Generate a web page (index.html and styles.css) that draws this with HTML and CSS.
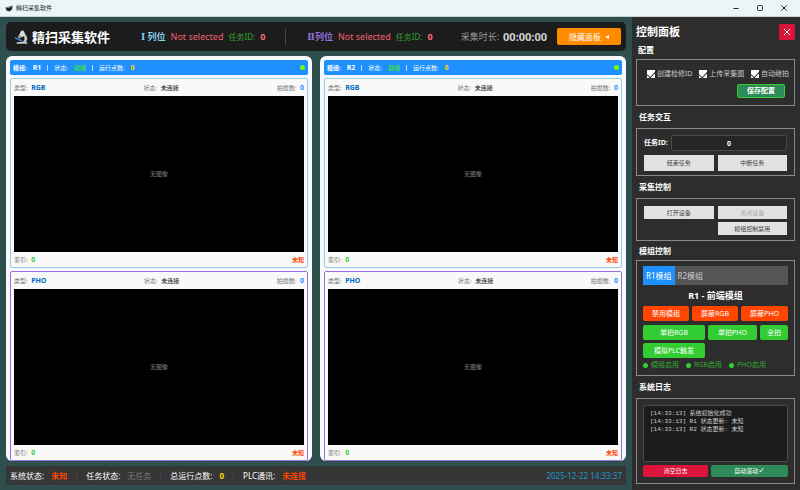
FILE: index.html
```html
<!DOCTYPE html>
<html lang="zh-CN">
<head>
<meta charset="utf-8">
<title>精扫采集软件</title>
<link rel="stylesheet" href="styles.css">
</head>
<body>
<div class="titlebar">
  <svg class="app-icon" viewBox="0 0 16 16"><path d="M1 7l8-2 6-2-1 8-5 4-6-2z" fill="#222"/><path d="M2 7l6 1 6-4-5 0z" fill="#8aa"/></svg>
  <span class="app-name">精扫采集软件</span>
  <button class="win-btn" aria-label="最小化"><svg viewBox="0 0 8 8"><path d="M1.500 4.500h5"/></svg></button>
  <button class="win-btn" aria-label="最大化"><svg viewBox="0 0 8 8"><rect x="1.500" y="1.500" width="5" height="5" rx="1"/></svg></button>
  <button class="win-btn" aria-label="关闭"><svg viewBox="0 0 8 8"><path d="M1.500 1.500l5 5M6.500 1.500l-5 5"/></svg></button>
</div>
<div class="app">
  <main class="main">
    <header class="header">
      <svg class="logo" viewBox="0 0 40 38"><path d="M20 2l6-2 7 12-9 8-10-5z" fill="#d8dcde"/><path d="M13 15l8 4-3 5-8-4z" fill="#9aa0a4"/><path d="M30 11c9 4 10 15 4 22h-9c6-5 7-12 2-17z" fill="#c4c9cc"/><path d="M3 19l22 10-2 4L2 23z" fill="#3d7fd0"/><path d="M10 33h26l3 5H6z" fill="#c4c9cc"/></svg>
      <h1>精扫采集软件</h1>
      <div class="lane">
        <b class="lane-one"><span class="roman">Ⅰ</span> 列位</b><span class="unselected">Not selected</span><span class="task">任务ID:</span><b class="task-num">0</b>
      </div>
      <i class="divider"></i>
      <div class="lane">
        <b class="lane-two"><span class="roman">Ⅱ</span>列位</b><span class="unselected">Not selected</span><span class="task">任务ID:</span><b class="task-num">0</b>
      </div>
      <div class="elapsed">采集时长:<b>00:00:00</b></div>
      <button class="hide-btn">隐藏面板 <svg viewBox="0 0 4 6"><path d="M4 1v4L0 3z" fill="#fff"/></svg></button>
    </header>
    <div class="modules">
      <section class="module">
        <div class="module-bar"><b>模组:</b><b class="name">R1</b><i></i><span>状态:</span><b class="ready">就绪</b><i></i><span>运行点数:</span><b class="points">0</b><em class="lamp"></em></div>
        <article class="camera rgb">
          <div class="row"><span>类型: <b class="kind">RGB</b></span><span>状态: <b>未连接</b></span><span>拍摄数: <b class="count">0</b></span></div>
          <div class="view">无图像</div>
          <div class="row foot"><span>索引: <b class="index">0</b></span><b class="unknown">未知</b></div>
        </article>
        <article class="camera pho">
          <div class="row"><span>类型: <b class="kind">PHO</b></span><span>状态: <b>未连接</b></span><span>拍摄数: <b class="count">0</b></span></div>
          <div class="view">无图像</div>
          <div class="row foot"><span>索引: <b class="index">0</b></span><b class="unknown">未知</b></div>
        </article>
      </section>
      <section class="module">
        <div class="module-bar"><b>模组:</b><b class="name">R2</b><i></i><span>状态:</span><b class="ready">就绪</b><i></i><span>运行点数:</span><b class="points">0</b><em class="lamp"></em></div>
        <article class="camera rgb">
          <div class="row"><span>类型: <b class="kind">RGB</b></span><span>状态: <b>未连接</b></span><span>拍摄数: <b class="count">0</b></span></div>
          <div class="view">无图像</div>
          <div class="row foot"><span>索引: <b class="index">0</b></span><b class="unknown">未知</b></div>
        </article>
        <article class="camera pho">
          <div class="row"><span>类型: <b class="kind">PHO</b></span><span>状态: <b>未连接</b></span><span>拍摄数: <b class="count">0</b></span></div>
          <div class="view">无图像</div>
          <div class="row foot"><span>索引: <b class="index">0</b></span><b class="unknown">未知</b></div>
        </article>
      </section>
    </div>
    <footer class="status">
      <span>系统状态:</span><b class="bad">未知</b><i></i>
      <span>任务状态:</span><span class="none">无任务</span><i></i>
      <span>总运行点数:</span><b class="total">0</b><i></i>
      <span>PLC通讯:</span><b class="bad">未连接</b>
      <time>2025-12-22 14:33:37</time>
    </footer>
  </main>
  <aside class="sidebar">
    <div class="side-head"><h2>控制面板</h2><button class="close" aria-label="关闭面板"><svg viewBox="0 0 8 8"><path d="M1 1l6 6M7 1l-6 6"/></svg></button></div>
    <h3 class="first">配置</h3>
    <div class="group config">
      <div class="checks">
        <label><input type="checkbox" checked>创建检修ID</label>
        <label><input type="checkbox" checked>上传采集图</label>
        <label><input type="checkbox" checked>自动继拍</label>
      </div>
      <button class="save">保存配置</button>
    </div>
    <h3>任务交互</h3>
    <div class="group">
      <div class="field"><label for="task">任务ID:</label><input id="task" type="text" value="0"></div>
      <div class="pair tall"><button class="plain">结束任务</button><button class="plain">中断任务</button></div>
    </div>
    <h3>采集控制</h3>
    <div class="group devices">
      <div class="pair"><button class="plain">打开设备</button><button class="plain" disabled>关闭设备</button><button class="plain second">模组控制禁用</button></div>
    </div>
    <h3 class="compact">模组控制</h3>
    <div class="group control">
      <div class="tabs"><button class="tab active">R1模组</button><button class="tab">R2模组</button></div>
      <h4>R1 - 前端模组</h4>
      <div class="oranges"><button class="orange">禁用模组</button><button class="orange">屏蔽RGB</button><button class="orange">屏蔽PHO</button></div>
      <div class="greens"><button class="green">单拍RGB</button><button class="green">单拍PHO</button><button class="green">全拍</button><button class="green">模拟PLC触发</button></div>
      <div class="flags"><span>模组启用</span><span>RGB启用</span><span>PHO启用</span></div>
    </div>
    <h3>系统日志</h3>
    <div class="group log-group">
      <div class="log"><p>[14:33:13] 系统初始化成功</p><p>[14:33:13] R1 状态更新: 未知</p><p>[14:33:13] R2 状态更新: 未知</p></div>
      <div class="log-actions"><button class="clear">清空日志</button><button class="scroll">自动滚动<span class="tick">✓</span></button></div>
    </div>
  </aside>
</div>
</body>
</html>
```
FILE: styles.css
```css
* { box-sizing: border-box; margin: 0; padding: 0; }
body {
  display: flex;
  flex-direction: column;
  min-height: 100vh;
  background: #2f4f4f;
  color: #fff;
  font: 8px/12px "Noto Sans", "Noto Sans CJK SC", sans-serif;
  white-space: nowrap;
}
button, input { font: inherit; color: inherit; border: 0; }
i, em { font-style: normal; }
svg { display: block; }

.titlebar {
  display: flex;
  align-items: center;
  height: 17px;
  padding: 0 4px 1px 5px;
  background: #eaf5f8;
  border-bottom: 1px solid #c4d4d6;
  color: #222;
}
.app-icon { width: 8px; height: 8px; }
.app-name { flex: 1; margin-left: 3px; font-size: 6px; }
.win-btn { display: flex; justify-content: center; width: 24px; background: none; }
.win-btn svg { width: 8px; height: 8px; fill: none; stroke: #222; stroke-width: 1; }

.app { flex: 1; display: flex; }
.main { flex: 1; display: flex; flex-direction: column; padding: 5px 6px; }

.header {
  display: flex;
  align-items: center;
  height: 29px;
  padding: 0 5px 0 8px;
  background: #1c1c1c;
  border-radius: 5px;
  font-size: 9px;
}
.logo { width: 14px; height: 14px; }
h1 { margin: 0 31px 0 4px; font-size: 13px; }
.lane { display: flex; align-items: center; gap: 5px; }
.lane-one { color: #87ceeb; }
.lane-two { color: #9370db; }
.roman { font-family: "DejaVu Serif", serif; }
.unselected { color: #f0606c; }
.task { color: #32a532; font-size: 8px; }
.task-num { color: #ff6b6b; }
.divider { width: 1px; height: 16px; margin: 0 21px 0 20px; background: #484848; }
.elapsed { display: flex; align-items: center; gap: 4px; margin-left: auto; color: #999; }
.elapsed b { font-size: 11px; color: #d0d0d0; }
.hide-btn {
  display: flex;
  align-items: center;
  justify-content: center;
  gap: 4px;
  width: 64px;
  height: 17px;
  margin-left: 10px;
  background: #ff8c00;
  border-radius: 2px;
  font-size: 8px;
}
.hide-btn svg { width: 4px; height: 6px; }

.modules { flex: 1; display: grid; grid-template-columns: 1fr 1fr; gap: 8px; margin: 5px 0; }
.module {
  display: flex;
  flex-direction: column;
  gap: 3px;
  padding: 4px 4px 0;
  background: #f8f8ff;
  border-radius: 6px;
}
.module-bar {
  display: flex;
  align-items: center;
  gap: 6px;
  height: 15px;
  padding: 0 3px;
  background: #1e90ff;
  border-radius: 2px;
  font-size: 6px;
}
.module-bar i { width: 1px; height: 6px; background: #b9dcff; }
.module-bar .name, .module-bar .points { font-size: 7px; }
.ready { color: #3fdc50; }
.points { color: #ffd700; }
.lamp { width: 5px; height: 5px; margin-left: auto; background: #7cfc00; border-radius: 50%; }
.camera {
  flex: 1;
  display: flex;
  flex-direction: column;
  padding: 0 3px;
  background: #f9f9f9;
  border: 1px solid #87ceeb;
  border-radius: 2px;
}
.camera.rgb { border-color: #8fd0dc; }
.camera.pho { border-color: #9370db; }
.row {
  display: flex;
  justify-content: space-between;
  align-items: center;
  height: 17px;
  color: #777;
  font-size: 6px;
}
.row.foot { height: 15px; }
.row b { margin-left: 2px; color: #555; }
.row .kind, .row .count, .row .index { font-size: 7px; }
.row .kind { color: #0068c0; }
.row .count { color: #1e90ff; }
.row .index { color: #32cd32; }
.row .unknown { color: #ff4500; }
.view {
  flex: 1;
  display: flex;
  align-items: center;
  justify-content: center;
  background: #000;
  color: #808080;
  font-size: 6px;
}

.status { display: flex; align-items: center; height: 19px; padding: 0 4px; background: #363636; }
.status b, .status .none { margin-left: 7px; }
.status i { width: 1px; height: 8px; margin: 0 9px; background: #444; }
.bad { color: #ff4500; }
.none { color: #777; }
.total { color: #ffd700; }
.status time { margin-left: auto; color: #1c96cc; }

.sidebar { width: 168px; padding: 7px 5px 5px 4px; background: #2d2d2d; }
.side-head { display: flex; justify-content: space-between; height: 16px; align-items: center; }
h2 { font-size: 11px; }
.close { display: grid; place-items: center; width: 16px; height: 16px; background: #dc143c; border-radius: 2px; }
.close svg { width: 8px; height: 8px; fill: none; stroke: #fff; stroke-width: 1; }
h3 { height: 22px; padding: 5px 3px; font-size: 8px; }
h3.first { height: 19px; padding: 4px 2px; }
h3.compact { height: 19px; padding: 4px 3px; }
.group { padding: 6px 7px 4px; border: 1px solid #8a8a8a; }
.group button { display: flex; align-items: center; justify-content: center; border-radius: 2px; }
.config { height: 47px; padding: 8px 5px 0 10px; font-size: 7px; }
.checks { display: flex; justify-content: space-between; }
.checks label { display: flex; align-items: center; gap: 2px; color: #c8c8c8; }
.checks input { position: relative; overflow: hidden; appearance: none; width: 8px; height: 8px; background: #fff; }
.checks input:checked::after {
  content: "";
  position: absolute;
  left: 2px;
  top: -1px;
  width: 4px;
  height: 8px;
  border: solid #333;
  border-width: 0 1px 1px 0;
  transform: rotate(42deg);
}
.group .save { width: 48px; height: 14px; margin: 4px 4px 0 auto; background: #2e8b57; border: 1px solid #32cd32; font-weight: bold; }
.field { display: flex; align-items: center; margin-bottom: 4px; font-size: 7px; font-weight: bold; }
.field label { width: 27px; }
.field input { flex: 1; min-width: 0; height: 16px; background: #252525; border: 1px solid #484848; border-radius: 2px; text-align: center; }
.devices { padding-top: 7px; padding-bottom: 5px; }
.pair { display: grid; grid-template-columns: 1fr 1fr; gap: 3px 4px; }
.group .plain { height: 13px; background: #e1e1e1; color: #444; border-radius: 0; font-size: 6px; }
.group .tall .plain { height: 16px; }
.group .plain:disabled { color: #aaa; }
.group .second { grid-column: 2; }

.control { padding: 5px 6px 4px; font-size: 7px; }
.tabs { display: flex; height: 19px; background: #555; font-size: 8px; }
.group .tab { padding: 0 3px; background: none; border-radius: 0; color: #ccc; }
.group .tab.active { background: #1e90ff; color: #fff; }
h4 { height: 21px; line-height: 21px; font-size: 9px; text-align: center; }
.oranges { display: grid; grid-template-columns: 46px 46px 1fr; gap: 3px; }
.group .orange { height: 15px; background: #ff4500; }
.greens { display: grid; grid-template-columns: 62px 49px 1fr; gap: 3px; margin-top: 4px; }
.group .green { height: 15px; background: #32cd32; }
.flags { display: flex; gap: 7px; margin-top: 1px; color: #32a532; }
.flags span { display: flex; align-items: center; gap: 3px; }
.flags span::before { content: ""; width: 5px; height: 5px; background: #32cd32; border-radius: 50%; }

.log-group { padding: 6px; }
.log {
  height: 57px;
  padding: 4px 6px;
  background: #1c1c1c;
  border: 1px solid #4a4a4a;
  border-radius: 2px;
  color: #ccc;
  font: 6px/8px "Liberation Mono", "Noto Sans CJK SC", monospace;
}
.log-actions { display: grid; grid-template-columns: 65px 1fr; gap: 3px; margin-top: 3px; font-size: 6px; }
.group .clear { height: 12px; background: #dc143c; }
.group .scroll { height: 12px; background: #2e8b57; }
.tick { font: bold 8px/12px "DejaVu Sans", sans-serif; }
```
